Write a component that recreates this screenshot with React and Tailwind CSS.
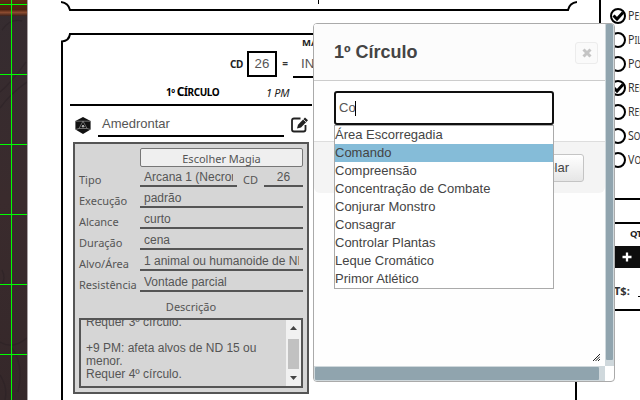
import React from "react";

const label = "font-['Noto_Sans',sans-serif] text-[11px] text-[#555] whitespace-nowrap";
const fieldBase =
  "h-[18px] border-b-2 border-[#555] text-[12px] leading-[16px] text-[#555] whitespace-nowrap overflow-hidden";

function MapStrip() {
  return (
    <svg className="block h-[400px] w-[28px] shrink-0" viewBox="0 0 28 400">
      <defs>
        <linearGradient id="cloth" x1="0" y1="0" x2="0" y2="1">
          <stop offset="0" stopColor="#352c30" />
          <stop offset=".5" stopColor="#3a2b2d" />
          <stop offset="1" stopColor="#35282a" />
        </linearGradient>
        <linearGradient id="wood" x1="0" y1="0" x2="0" y2="1">
          <stop offset="0" stopColor="#5b2c12" />
          <stop offset=".6" stopColor="#4c2110" />
          <stop offset=".78" stopColor="#8a4b30" />
          <stop offset="1" stopColor="#3b211b" />
        </linearGradient>
      </defs>
      <rect width="28" height="400" fill="url(#cloth)" />
      <rect width="28" height="16" fill="url(#wood)" />
      <g fill="none" stroke="#292024" strokeWidth="1.3" opacity=".45">
        <path d="M2 30q8-12 20-9M0 92q12-10 26-30M0 108q10-14 27-26M2 270q4 8 0 14M0 342q12 8 27-4M12 348q12 16 6 44M0 375q8 12 5 25" />
      </g>
      <path d="M0 4.5H28M0 74.5H28M0 144.5H28M0 214.5H28M0 284.5H28M0 354.5H28" stroke="#00ff00" />
      <rect x="11" y="0" width="1" height="400" fill="#00ff00" />
      <path d="M27.5 0V400" stroke="#aaa2a4" />
    </svg>
  );
}

function Field({ name, value }) {
  return (
    <div className="flex h-[21px]">
      <span className={`${label} w-[61px] pt-[5px] leading-[18px]`}>{name}</span>
      <div className={`${fieldBase} mt-[3px] flex-1 px-[4px]`}>
        <div className="overflow-hidden">{value}</div>
      </div>
    </div>
  );
}

function SpellPanel() {
  return (
    <div className="ml-[10px] mt-[5px] h-[252px] w-[236px] border-2 border-[#555] bg-[#d6d6d6] px-[4px] pt-[4px]">
      <div className="ml-[61px] flex h-[19px] items-center justify-center rounded-[2px] border border-[#767676] bg-[#efefef] pt-[2px] font-['Noto_Sans',sans-serif] text-[11px] leading-[15px] text-[#555]">
        Escolher Magia
      </div>
      <div className="flex h-[20px]">
        <span className={`${label} w-[61px] pt-[4px] leading-[18px]`}>Tipo</span>
        <div className={`${fieldBase} mt-[2px] w-[97px] px-[4px]`}>
          <div className="overflow-hidden">Arcana 1 (Necromancia)</div>
        </div>
        <span className={`${label} w-[27px] pt-[4px] text-center leading-[18px]`}>CD</span>
        <div className={`${fieldBase} mt-[2px] flex-1 text-center`}>26</div>
      </div>
      <Field name="Execução" value="padrão" />
      <Field name="Alcance" value="curto" />
      <Field name="Duração" value="cena" />
      <Field name="Alvo/Área" value="1 animal ou humanoide de ND 4" />
      <Field name="Resistência" value="Vontade parcial" />
      <div className={`${label} h-[26px] pt-[6px] text-center leading-[18px]`}>Descrição</div>
      <div className="flex h-[70px] border-2 border-[#555]">
        <div className="flex flex-1 flex-col justify-end overflow-hidden whitespace-nowrap pb-[5px] pl-[5px] text-[12px] leading-[13px] text-[#555]">
          <div>Requer 3º círculo.</div>
          <div>&nbsp;</div>
          <div>+9 PM: afeta alvos de ND 15 ou</div>
          <div>menor.</div>
          <div>Requer 4º círculo.</div>
        </div>
        <div className="flex w-[15px] flex-col items-center bg-[#f1f1f1]">
          <svg className="h-[19px] w-[15px]" viewBox="0 0 15 19"><path d="M4 10L7.5 6L11 10Z" fill="#444" /></svg>
          <div className="h-[30px] w-[11px] bg-[#c1c1c1]" />
          <svg className="h-[17px] w-[15px]" viewBox="0 0 15 17"><path d="M4 7L7.5 11L11 7Z" fill="#444" /></svg>
        </div>
      </div>
    </div>
  );
}

function D20() {
  return (
    <svg className="h-[17px] w-[16px]" viewBox="0 0 16 17">
      <path d="M8 0L15.6 4V12.5L8 17L.4 12.5V4Z" fill="#111" />
      <path d="M8 4.2L12 11.5H4ZM12 11.5L15.5 12.5M4 11.5L.5 12.5M8 4.2L15.3 4.2M8 4.2L.7 4.2" fill="none" stroke="#aaa" strokeWidth=".6" />
      <path d="M7 9.8L8 8L9.2 9.8Z" fill="none" stroke="#fff" strokeWidth=".7" />
    </svg>
  );
}

function EditIcon() {
  return (
    <svg className="h-[16px] w-[18px]" viewBox="0 0 18 16">
      <path d="M9.5 1.5H3Q1 1.5 1 3.5V12.5Q1 14.5 3 14.5H12.5Q14.5 14.5 14.5 12.5V8" fill="none" stroke="#222" strokeWidth="1.8" />
      <path d="M6 11.5L7 7.7L14 .5L17 3.3L10 10.5Z" fill="#222" />
      <path d="M12.2 2.3L15.2 5.1" stroke="#fff" strokeWidth=".8" />
    </svg>
  );
}

function SpellSheet() {
  return (
    <div className="flex w-[516px] shrink-0 flex-col">
      <svg className="block h-[11px] w-[516px] shrink-0" viewBox="0 0 516 11">
        <path d="M0 2Q7.5 3 9 10H507Q508.5 3 516 2" fill="none" stroke="#000" strokeWidth="2" />
        <path d="M257.5 0V4" stroke="#000" />
      </svg>
      <svg className="mt-[22px] block h-[10px] w-[516px] shrink-0" viewBox="0 0 516 10">
        <path d="M1 10V8.5Q8 8 9 1H507Q508 8 515 8.5V10" fill="none" stroke="#000" strokeWidth="2" />
      </svg>
      <div className="h-[357px] border-x-2 border-black">
        <div className="flex h-[41px] items-start">
          <span className="ml-[165px] mt-[13px] w-[19px] pl-[2px] font-['Noto_Sans',sans-serif] text-[10px] font-bold leading-[16px] tracking-[-0.5px] text-[#222]">CD</span>
          <div className="mt-[8px] flex h-[26px] w-[30px] items-center justify-center border-2 border-black text-[13.3px] text-[#555]">26</div>
          <span className="w-[16px] pt-[12px] text-center font-['Noto_Sans',sans-serif] text-[10px] font-bold leading-[16px] text-[#333]">=</span>
          <div className="-mt-[6px] h-[41px] w-[60px] border-b-2 border-black">
            <div className="pl-[9px] font-['Noto_Sans',sans-serif] text-[9.5px] font-bold leading-[11px] text-[#222]">MAGIA</div>
            <div className="pl-[8px] pt-[8px] text-[13.3px] leading-[16px] text-[#555]">INT</div>
          </div>
        </div>
        <div className="ml-[7px] flex h-[22px] w-[242px] items-start border-b-2 border-black font-['Noto_Sans',sans-serif]">
          <span className="ml-[96px] w-[100px] whitespace-nowrap text-[10px] font-bold leading-[16px] tracking-[-0.45px] text-black">1º <span className="text-[12px]">C</span>ÍRCULO</span>
          <span className="pt-px text-[11px] italic leading-[16px] tracking-[-0.3px] text-[#222]">1 PM</span>
        </div>
        <div className="ml-[12px] flex h-[31px] items-start pt-[11px]">
          <D20 />
          <div className="ml-[7px] h-[20px] w-[186px] border-b-2 border-black pl-[4px] text-[13px] leading-[14px] text-[#555]">Amedrontar</div>
          <div className="ml-[7px]"><EditIcon /></div>
        </div>
        <SpellPanel />
      </div>
    </div>
  );
}

const skills = [
  { first: "P", rest: "ERCEPÇÃO", on: true },
  { first: "P", rest: "ILOTAGEM", on: false },
  { first: "P", rest: "ONTARIA", on: false },
  { first: "R", rest: "EFLEXOS", on: true },
  { first: "R", rest: "ELIGIÃO", on: false },
  { first: "S", rest: "OBREVIVÊNCIA", on: false },
  { first: "V", rest: "ONTADE", on: false },
];

function SkillColumn() {
  return (
    <div className="ml-[22px] flex w-[200px] shrink-0 flex-col">
      <div className="h-[200px] border-b-2 border-l-2 border-black pl-[9px] pt-[4px]">
        {skills.map((s, i) => (
          <div key={i} className="flex h-[24px] items-center whitespace-nowrap">
            <svg className="h-[16px] w-[16px]" viewBox="0 0 16 16">
              <circle cx="8" cy="8" r="7" fill="#fff" stroke="#000" strokeWidth="2" />
              {s.on && <path d="M3.5 7.5L7 11L13 4.5" fill="none" stroke="#000" strokeWidth="3" />}
            </svg>
            <span className="ml-[2px] origin-left scale-x-[0.85] font-['Noto_Sans',sans-serif] text-[10px] leading-[16px] text-[#333]">
              <span className="text-[12.5px]">{s.first}</span>{s.rest}
            </span>
          </div>
        ))}
      </div>
      <div className="mt-[22px] h-[89px] border-y-2 border-black pl-[15px] font-['Noto_Sans',sans-serif] font-bold text-[#222]">
        <div className="pl-[16px] pt-[3px] text-[9.5px] leading-[14px] tracking-[-0.5px]">QTD</div>
        <div className="mt-[5px] flex h-[22px] w-[28px] items-center justify-center bg-[#0e0e0e] pr-[2px]">
          <svg className="h-[10px] w-[10px]" viewBox="0 0 10 10"><path d="M5 .5V9.5M.5 5H9.5" stroke="#fff" strokeWidth="2.3" /></svg>
        </div>
        <div className="flex pt-[14px]">
          <span className="w-[24px] text-[11px] leading-[18px] text-[#333]">T$:</span>
          <div className="h-[15px] w-[80px] border-b border-black" />
        </div>
      </div>
    </div>
  );
}

const options = [
  "Área Escorregadia", "Comando", "Compreensão", "Concentração de Combate",
  "Conjurar Monstro", "Consagrar", "Controlar Plantas", "Leque Cromático", "Primor Atlético",
];

function Dialog() {
  return (
    <div className="absolute left-[313px] top-[23px] flex h-[359px] w-[302px] flex-col overflow-hidden rounded-[4px] border border-[#aaa] bg-white">
      <div className="flex h-[342px]">
        <div className="flex w-[291px] flex-col bg-[#fefefe]">
          <div className="flex h-[57px] items-center justify-between border-b border-[#ccc] bg-[#fcfcfc] pl-[20px] pr-[7px]">
            <h1 className="text-[18px] font-bold text-[#444]">1º Círculo</h1>
            <div className="mt-[2px] flex h-[22px] w-[23px] items-center justify-center rounded-[3px] border border-[#ececec] bg-[#fafafa]">
              <svg className="h-[10px] w-[10px]" viewBox="0 0 10 10"><path d="M1.5 1.5L8.5 8.5M8.5 1.5L1.5 8.5" stroke="#c4c4c4" strokeWidth="3" /></svg>
            </div>
          </div>
          <div className="relative h-[60px] pl-[20px] pt-[10px]">
            <div className="flex h-[34px] w-[220px] items-center rounded-[3px] border-2 border-[#101010] bg-white pl-[3px] text-[13px] text-[#555]">
              Co<span className="-ml-px h-[15px] w-px bg-black" />
            </div>
            <ul className="absolute left-[20px] top-[44px] z-10 h-[164px] w-[220px] border border-[#aaa] bg-white text-[13px] leading-[18px] text-[#444]">
              {options.map((o) => (
                <li key={o} className={o === "Comando" ? "h-[18px] bg-[#85bcd8]" : "h-[18px]"}>{o}</li>
              ))}
            </ul>
          </div>
          <div className="flex h-[52px] items-center justify-end rounded-b-[6px] border-t border-[#ddd] bg-[#f4f4f4] pr-[21px]">
            <div className="flex h-[28px] w-[84px] items-center justify-end rounded-[3px] border border-[#c4c4c4] bg-linear-to-b from-white to-[#e6e6e6] pr-[14px] text-[13px] text-[#444]">Cancelar</div>
          </div>
          <div className="flex flex-1 items-end justify-end pb-[5px] pr-[5px]">
            <svg className="h-[7px] w-[7px]" viewBox="0 0 7 7"><path d="M0 7L7 0M2.5 7L7 2.5M5 7L7 5" stroke="#222" strokeWidth="1" /></svg>
          </div>
        </div>
        <div className="w-[9px] bg-[#cfd8dc] px-px">
          <div className="h-[336px] rounded-[1px] bg-[#90a4ae]" />
        </div>
      </div>
      <div className="h-[15px] w-[291px] bg-[#cfd8dc] py-px pl-px">
        <div className="h-[13px] w-[284px] rounded-[1px] bg-[#90a4ae]" />
      </div>
    </div>
  );
}

export default function App() {
  return (
    <div className="relative flex h-[400px] w-[640px] overflow-hidden bg-white font-['Liberation_Sans',Arial,sans-serif]">
      <MapStrip />
      <div className="w-[33px] shrink-0" />
      <SpellSheet />
      <SkillColumn />
      <Dialog />
    </div>
  );
}
